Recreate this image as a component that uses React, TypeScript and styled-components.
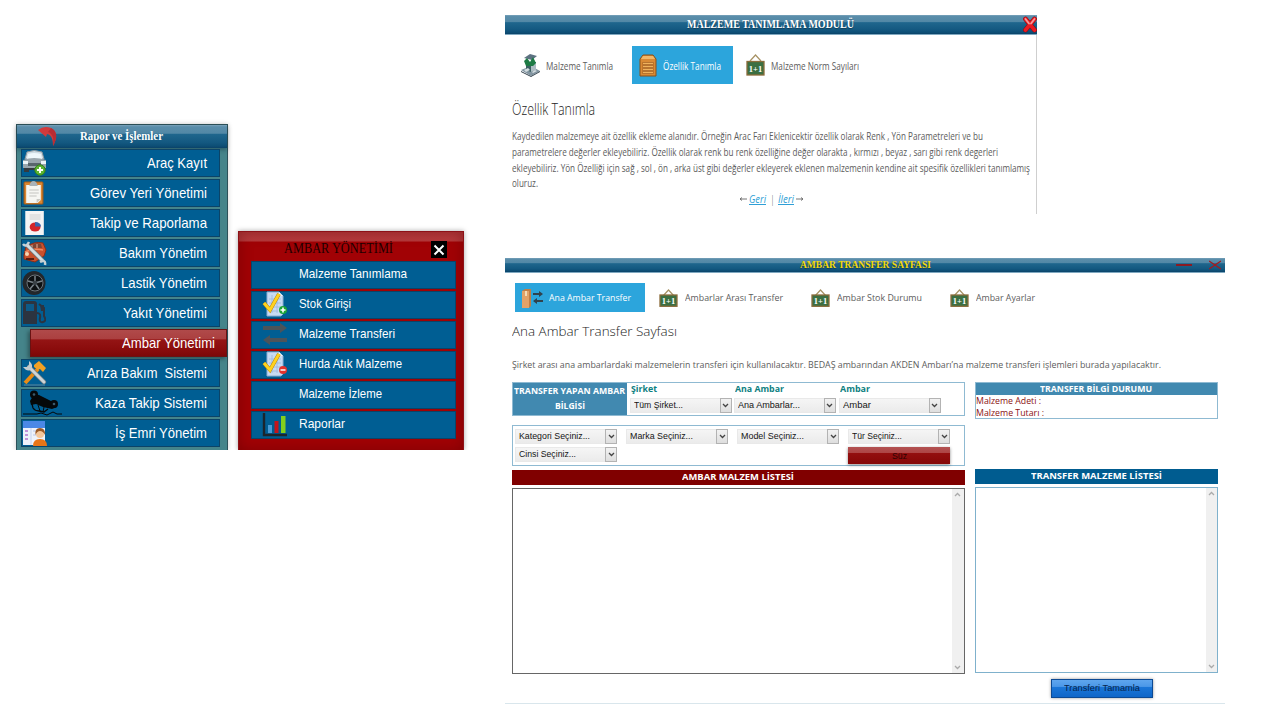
import React, { useLayoutEffect, useRef, useState } from 'react';
import styled, { createGlobalStyle, css } from 'styled-components';

const Global = createGlobalStyle`
  *, *::before, *::after { box-sizing: border-box; }
  body { margin: 0; background: #fff; }
`;

const sans = '"Liberation Sans", Arial, sans-serif';
const serif = '"Liberation Serif", "Times New Roman", serif';
const open = '"Open Sans", "Noto Sans", sans-serif';

/* ---------- fitted text ---------- */

const FitBox = styled.span<{ $w: number }>`
  display: inline-block;
  flex: none;
  width: ${(p) => p.$w}px;
  white-space: pre;
  text-align: left;
`;
const FitInner = styled.span`
  display: inline-block;
  transform-origin: 0 50%;
  text-decoration: inherit;
`;

function Fit({ w, children }: { w: number; children: React.ReactNode }) {
  const ref = useRef<HTMLSpanElement>(null);
  const [scale, setScale] = useState(1);
  useLayoutEffect(() => {
    if (ref.current) {
      const natural = parseFloat(getComputedStyle(ref.current).width);
      if (natural > 0) setScale(w / natural);
    }
  }, [w]);
  return (
    <FitBox $w={w}>
      <FitInner ref={ref} style={{ transform: `scaleX(${scale})` }}>{children}</FitInner>
    </FitBox>
  );
}

/* ---------- page ---------- */

const Page = styled.main`
  display: flex;
  align-items: flex-start;
  width: 1280px;
  height: 720px;
  overflow: hidden;
  padding-left: 16px;
  background: #fff;
`;

const blueGloss = css`
  background: linear-gradient(#7ba3bb 0, #5a8daa 8%, #5288a6 36%, #1f668d 40%, #145981 75%, #0d4e75 92%, #0b4267 100%);
`;

/* ---------- main menu ---------- */

const Menu = styled.nav`
  flex: none;
  width: 212px;
  height: 326px;
  margin-top: 124px;
  background: #45848a;
  border: 1px solid #2d5159;
  border-bottom: 0;
  box-shadow: 0 0 5px rgba(0, 0, 0, 0.2);
  clip-path: inset(-6px -6px 0 -6px);
  font-family: ${sans};
`;
const MenuHead = styled.div`
  ${blueGloss}
  display: flex;
  align-items: center;
  height: 23px;
  padding-left: 20px;
  gap: 19px;
  color: #fff;
  font: bold 12px ${serif};
  box-shadow: 0 2px 4px rgba(0, 30, 50, 0.35);
`;
const MenuList = styled.div`
  display: flex;
  flex-direction: column;
  gap: 2px;
  padding: 1px 0 0 4px;
`;
const MenuItem = styled.div<{ $active?: boolean }>`
  display: flex;
  align-items: center;
  justify-content: space-between;
  width: 199px;
  height: 28px;
  padding: 0 12px 0 0;
  border: 1px solid #0b4468;
  background: #005e93;
  color: #fff;
  font-size: 15px;
  line-height: 26px;
  ${(p) =>
    p.$active &&
    css`
      width: 197px;
      margin-left: 9px;
      padding-right: 11px;
      border-color: #6a1212;
      background: linear-gradient(#b04a4a 0, #ab4040 34%, #941414 38%, #8a0c0c 75%, #7c0808 100%);
      box-shadow: -2px 2px 4px rgba(0, 0, 0, 0.35);
    `}
`;

/* ---------- submenu ---------- */

const SubMenu = styled.nav`
  flex: none;
  width: 226px;
  height: 219px;
  margin: 231px 0 0 9.500px;
  padding: 0 0 0 12px;
  border: 1px solid #8d1117;
  border-bottom: 0;
  background: linear-gradient(rgba(255, 255, 255, 0.22) 0, rgba(255, 255, 255, 0.22) 9px, transparent 10px), #a10205;
  box-shadow: 0 0 5px rgba(0, 0, 0, 0.35), inset 0 0 14px rgba(80, 0, 0, 0.4);
  clip-path: inset(-6px -6px 0 -6px);
  font-family: ${sans};
`;
const SubHead = styled.div`
  display: flex;
  align-items: flex-end;
  height: 29px;
  padding: 0 16px 3px 33px;
  justify-content: space-between;
  color: #200000;
  font: 14px/18px ${serif};
`;
const SubList = styled.div`
  display: flex;
  flex-direction: column;
  gap: 2px;
`;
const SubItem = styled.div`
  display: grid;
  grid-template-columns: 47px auto;
  grid-template-rows: 24px;
  justify-content: start;
  align-items: center;
  width: 205px;
  height: 28px;
  border: 1px solid #0b4468;
  background: #005e93;
  color: #fff;
  font-size: 13.5px;
  line-height: 24px;
  svg { margin-left: 10px; }
`;

/* ---------- windows ---------- */

const Windows = styled.div`
  display: flex;
  flex-direction: column;
  flex: none;
  width: 720px;
  margin: 15px 0 0 41.500px;
  gap: 44px;
  color: #5c5c5c;
  font-family: ${open};
`;
const Win = styled.section<{ $w: number; $h: number; $side?: boolean }>`
  width: ${(p) => p.$w}px;
  height: ${(p) => p.$h}px;
  border-right: ${(p) => (p.$side ? '1px solid #cfcfcf' : '0')};
  border-bottom: ${(p) => (p.$side ? '0' : '1px solid #d9e6ec')};
`;
const WinBar = styled.header<{ $h: number; $pad: number; $color: string; $size: number; $over: number }>`
  ${blueGloss}
  display: flex;
  align-items: center;
  height: ${(p) => p.$h}px;
  padding: 0 0 1px ${(p) => p.$pad}px;
  margin-right: ${(p) => -p.$over}px;
  border-bottom: 1px solid #7fa8c0;
  color: ${(p) => p.$color};
  font: bold ${(p) => p.$size}px/14px ${serif};
  text-shadow: 0 1px 1px rgba(0, 0, 0, 0.35);
`;
const Controls = styled.div<{ $gap: number; $right: number }>`
  display: flex;
  align-items: center;
  gap: ${(p) => p.$gap}px;
  margin: 1px ${(p) => p.$right}px 0 auto;
`;
const Tabs = styled.div<{ $top: number; $left: number; $h: number; $size: number }>`
  display: flex;
  height: ${(p) => p.$h}px;
  margin: ${(p) => p.$top}px 0 0 ${(p) => p.$left}px;
  font-size: ${(p) => p.$size}px;
`;
const Tab = styled.div<{ $w: number; $pad: number; $gap: number; $active?: boolean }>`
  display: flex;
  align-items: center;
  flex: none;
  width: ${(p) => p.$w}px;
  padding-left: ${(p) => p.$pad}px;
  gap: ${(p) => p.$gap}px;
  ${(p) => p.$active && css`background: #2ca5dc; color: #fff;`}
`;
const Title = styled.h2<{ $top: number; $size: number }>`
  display: flex;
  margin: ${(p) => p.$top}px 0 0 6.500px;
  font-weight: 300;
  font-size: ${(p) => p.$size}px;
  line-height: 22px;
  color: #222;
`;
const Paragraph = styled.div<{ $top: number; $size: number }>`
  display: flex;
  flex-direction: column;
  margin: ${(p) => p.$top}px 0 0 6.500px;
  font-size: ${(p) => p.$size}px;
  line-height: 15.8px;
`;
const Pager = styled.div`
  display: flex;
  align-items: center;
  gap: 2px;
  height: 16px;
  margin: -1px 0 0 234px;
  font-size: 10.5px;
`;
const Link = styled.a`
  display: inline-flex;
  color: #2f9fd6;
  font-style: italic;
  span { text-decoration: underline; }
`;
const Divider = styled.span`
  padding: 0 2px 0 3px;
`;

/* ---------- transfer form ---------- */

const Columns = styled.div`
  display: flex;
  gap: 10px;
  margin: 8px 0 0 6.500px;
`;
const Col = styled.div<{ $w: number }>`
  display: flex;
  flex-direction: column;
  width: ${(p) => p.$w}px;
`;
const Source = styled.div`
  display: flex;
  height: 34px;
  border: 1px solid #8fbad2;
`;
const SourceLabel = styled.div`
  width: 114px;
  padding: 0;
  background: #4189b0;
  color: #fff;
  font-weight: 700;
  font-size: 8.3px;
  line-height: 15.5px;
  text-align: center;
`;
const Field = styled.div<{ $ml: number }>`
  width: 102px;
  margin-left: ${(p) => p.$ml}px;
  color: #0d8080;
  font-weight: 700;
  font-size: 8.5px;
`;
const FieldName = styled.div`
  display: flex;
  height: 15px;
  padding-left: 1px;
  line-height: 11px;
`;
const SelectBox = styled.div`
  display: flex;
  justify-content: space-between;
  width: 102px;
  height: 15px;
  padding-left: 3px;
  border: 1px solid #e9e9e9;
  border-right: 0;
  background: linear-gradient(#f5f5f5, #ebebeb);
  color: #151515;
  font: 9px/12px ${sans};
`;
const Arrow = styled.span`
  display: flex;
  align-items: center;
  justify-content: center;
  width: 12px;
  height: 15px;
  margin-top: -1px;
  border: 1px solid #b3b3b3;
  background: linear-gradient(#f2f2f2, #dedede);
`;
const Filters = styled.div`
  display: grid;
  grid-template-columns: 111px 111px 111px 102px;
  grid-template-rows: 15px 17px;
  row-gap: 3px;
  height: 41px;
  margin-top: 9px;
  padding: 3px 0 0 2.500px;
  border: 1px solid #8fbad2;
`;
const FilterButton = styled.button`
  grid-column: 4;
  width: 102px;
  height: 17px;
  padding: 2px 0 0;
  border: 0;
  background: linear-gradient(#b35252 0, #ad4545 34%, #930f0f 38%, #850707 100%);
  box-shadow: 0 1px 3px rgba(0, 0, 0, 0.45);
  color: #2b0303;
  font: 9px/13px ${sans};
`;
const Strip = styled.div<{ $bg: string; $top: number }>`
  display: flex;
  align-items: center;
  justify-content: center;
  height: 15px;
  margin-top: ${(p) => p.$top}px;
  background: ${(p) => p.$bg};
  color: #fff;
  font-weight: 700;
  font-size: 8.8px;
`;
const ListBox = styled.div<{ $border: string }>`
  display: flex;
  justify-content: flex-end;
  height: 186px;
  margin-top: 3px;
  border: 1px solid ${(p) => p.$border};
`;
const Scroll = styled.div<{ $w: number }>`
  display: flex;
  flex-direction: column;
  justify-content: space-between;
  align-items: center;
  width: ${(p) => p.$w}px;
  padding: 3px 0;
  background: #f0f0f0;
`;
const Info = styled.div`
  display: flex;
  flex-direction: column;
  height: 37px;
  border: 1px solid #8fbad2;
  color: #8a1111;
  font-size: 8.6px;
  line-height: 12px;
`;
const InfoHead = styled.div`
  display: flex;
  justify-content: center;
  height: 13px;
  background: #4189b0;
  color: #fff;
  font-weight: 700;
  font-size: 8.5px;
`;
const DoneButton = styled.button`
  align-self: flex-start;
  width: 102px;
  height: 19px;
  margin: 6px 0 0 76px;
  padding: 0;
  border: 1px solid #0c4a94;
  background: linear-gradient(#5fa6ee 0, #4b98e8 38%, #1a76d8 42%, #0f66c8 100%);
  box-shadow: 0 0 3px rgba(0, 0, 0, 0.4);
  color: #06254e;
  font: 9px/14px ${sans};
`;

/* ---------- icons ---------- */

const Swirl = () => (
  <svg width="24" height="22" viewBox="0 0 24 22">
    <path d="M1 4Q7-1 14 2c6 3 7 9 2 18 0-6-1-11-6-12L9 11z" fill="#d23a3c" />
    <path d="M14 2c6 3 7 9 2 18 1-8 0-12-5-14z" fill="#b92c33" />
  </svg>
);
const CarAdd = () => (
  <svg width="25" height="26" viewBox="0 0 25 26">
    <path d="M5 2Q12-1 20 2l2 7H3z" fill="#cfdce3" stroke="#8a979e" />
    <path d="M6 4q6-2 13 0l1 5H5z" fill="#eef7fb" />
    <path d="M1 10q11-4 23 0v8H1z" fill="#9aa6ad" />
    <path d="M6 13h13v3H6z" fill="#59656c" />
    <path d="M1 11h5v3H1zM19 11h5v3h-5z" fill="#edf4f6" />
    <path d="M2 18h5v4H2zM7 18h9v2H7z" fill="#343b40" />
    <circle cx="18" cy="20" r="5.2" fill="#5cb531" stroke="#35811a" />
    <path d="M18 17v6M15 20h6" stroke="#fff" strokeWidth="2" />
  </svg>
);
const Clipboard = () => (
  <svg width="23" height="26" viewBox="0 0 22 26" preserveAspectRatio="none">
    <rect x="2" y="2" width="18" height="22" rx="1" fill="#d98631" stroke="#a85d18" />
    <path d="M4 5h14v15l-3 3H4z" fill="#f6f6f2" />
    <path d="m18 19-4 4v-4z" fill="#c9c9c4" />
    <path d="M7 6q1-5 4-5t4 5z" fill="#aab3b8" />
    <path d="M7 10h9M7 13h9M7 16h7" stroke="#c4c4c0" />
  </svg>
);
const PieReport = () => (
  <svg width="24" height="26" viewBox="0 0 22 26" preserveAspectRatio="none">
    <rect x="3" y="1" width="17" height="24" fill="#f4f4f4" />
    <path d="M7 5h10M7 7h10M7 9h10" stroke="#cfcfcf" strokeWidth="1.2" />
    <ellipse cx="12" cy="17" rx="5" ry="4.5" fill="#d3252a" />
    <path d="M12 16.500V12q5 0 5.500 4.500z" fill="#3567ad" />
  </svg>
);
const CarWrench = () => (
  <svg width="26" height="26" viewBox="0 0 26 26">
    <path d="m2 15 2-8q8-6 17-4l3 7-2 6-9 6L2 19z" fill="#c9502c" stroke="#8c2c15" />
    <path d="m7 8 3-3q5-3 9-1l1 4z" fill="#7d4535" />
    <path d="M10 8V5M15 8V4" stroke="#efb197" />
    <path d="M3 12q8-4 18-2" fill="none" stroke="#ee8a62" strokeWidth="1.500" />
    <circle cx="5" cy="14" r="2" fill="#f6d5b2" />
    <path d="M4 18h8v2H4z" fill="#5a1c10" />
    <path d="m5 5 16 16" stroke="#68757b" strokeWidth="4.500" />
    <path d="m5 5 16 16" stroke="#d5dde0" strokeWidth="3" />
    <path d="M1 4q3 4 6-2M23 25q1-6-5-3" fill="none" stroke="#c6d0d4" strokeWidth="2.500" />
  </svg>
);
const Tire = () => (
  <svg width="25" height="26" viewBox="0 0 25 26">
    <ellipse cx="12" cy="13" rx="11.500" ry="12" fill="#23272b" />
    <circle cx="13" cy="13" r="8" fill="#0d1012" stroke="#6b7379" />
    <path d="M13 6v7l7-2M13 13l4 6M13 13l-5 6M13 13 6 11" fill="none" stroke="#7b848a" strokeWidth="1.500" />
    <circle cx="13" cy="13" r="2.300" fill="#3b4247" />
  </svg>
);
const Pump = () => (
  <svg width="24" height="26" viewBox="0 0 24 26">
    <path d="M1 24V4q0-3 3-3h8q3 0 3 3v20z" fill="#2c3440" />
    <rect x="4" y="4" width="8" height="7" fill="#0d5a88" />
    <path d="M15 13q4 0 3 5t3 4 1-6V8l-5-4" fill="none" stroke="#2c3440" strokeWidth="2" />
    <path d="M18 5h4v6h-3z" fill="#2c3440" />
  </svg>
);
const Tools = () => (
  <svg width="26" height="26" viewBox="0 0 26 26">
    <path d="M2 25h21" stroke="#60869a" />
    <path d="M3 23 16 9" stroke="#e88b16" strokeWidth="4" />
    <path d="m12 5 5-4 7 7-3 4-3-3-2 1-4-3z" fill="#f0a124" />
    <path d="m7 7 15 15" stroke="#707b80" strokeWidth="4.500" strokeLinecap="round" />
    <path d="m7 7 15 15" stroke="#cdd4d6" strokeWidth="3" strokeLinecap="round" />
    <path d="M7 1q5 4 2 8T1 7l4 0 2-2z" fill="#c3cbce" />
  </svg>
);
const Crash = () => (
  <svg width="41" height="26" viewBox="0 0 41 26">
    <path d="M8 11 11 6q3-2 6-1l14 7q5 1 4 5l-5 2-9-2-7-3-5 1z" fill="#05080a" />
    <path d="M10 14 11 18q2 3 6 3l5 1 4-3" fill="none" stroke="#05080a" strokeWidth="1.300" />
    <path d="m16 15 2 6M22 17l-1 5" stroke="#05080a" />
    <circle cx="12" cy="4.500" r="4" fill="#05080a" />
    <circle cx="32" cy="14" r="4" fill="#05080a" />
    <circle cx="12" cy="4.500" r="1.300" fill="#3b5a6c" />
    <circle cx="32" cy="14" r="1.300" fill="#3b5a6c" />
    <path d="M1 24h14l4-1 6 2 6-3 4 2h5" fill="none" stroke="#05080a" />
  </svg>
);
const WorkOrder = () => (
  <svg width="25" height="26" viewBox="0 0 25 26">
    <rect x="1" y="1" width="22" height="24" fill="#eef2fb" />
    <rect x="1" y="1" width="22" height="7" fill="#4b88e6" />
    <path d="M9 8v17" stroke="#c5d3f0" />
    <path d="M3 11h3M3 15h3M3 19h3" stroke="#b573cf" strokeWidth="1.500" />
    <path d="M11 11h10M11 15h3" stroke="#b9c6e8" />
    <path d="M11 26q0-7 7-7t7 7z" fill="#e77517" />
    <circle cx="18" cy="14" r="4" fill="#f5c79b" />
    <path d="M13.500 15q-1-7 4.500-7t5 7q-2-4-5-4t-4.500 4z" fill="#9a5a28" />
  </svg>
);
const DocCheck = ({ minus }: { minus?: boolean }) => (
  <svg width="26" height="26" viewBox="0 0 26 26">
    <path d="M5 1h12l4 4v18l-2 2H5z" fill="#c8daf2" stroke="#8daed3" />
    <path d="M17 1v4h4z" fill="#eff6ff" />
    <path d="M7 8h12M7 12h12M7 16h12M7 20h9M10 4v18M15 4v18" stroke="#9db7dc" strokeWidth=".8" />
    <path d="m2 12 6 7L17 3" fill="none" stroke="#b8860c" strokeWidth="3.800" />
    <path d="m2 12 6 7L17 3" fill="none" stroke="#ffd21f" strokeWidth="2.800" />
    <circle cx="21" cy="19" r="4" fill={minus ? '#e3322d' : '#1ca436'} />
    <path d={minus ? 'M18.500 19h5' : 'M18.500 19h5M21 16.500v5'} stroke="#fff" strokeWidth="1.600" />
  </svg>
);
const Swap = () => (
  <svg width="26" height="22" viewBox="0 0 26 22">
    <path d="M1 3h17V0l7 5-7 5V7H1zM25 15H8v-3l-7 5 7 5v-3h17z" fill="#4c5359" />
  </svg>
);
const Chart = () => (
  <svg width="26" height="26" viewBox="0 0 26 26">
    <path d="M2 2v22h23" fill="none" stroke="#1c252c" strokeWidth="2.400" />
    <rect x="6" y="14" width="4" height="8" fill="#4b9bd6" />
    <rect x="12.500" y="10" width="4" height="12" fill="#c4141b" />
    <rect x="19" y="5" width="4.500" height="17" fill="#84cf1c" />
  </svg>
);
const Cross = styled.span`
  display: flex;
  align-items: center;
  justify-content: center;
  width: 16px;
  height: 17px;
  background: #000;
`;
const Blocks = () => (
  <svg width="19" height="23" viewBox="0 0 19 23">
    <path d="m0 16 10-4 9 5-9 5z" fill="#8295a1" />
    <path d="m0 17 10 5v1L0 18zM10 22l9-5v1l-9 5z" fill="#34434e" />
    <path d="M5 8h10v8l-5 2-5-2z" fill="#3b5f62" />
    <path d="M10 9h5v7l-5 2z" fill="#aebdc4" />
    <path d="m3 4 6-4 7 2-5 4z" fill="#5d7281" />
    <path d="m3 7 3-3 3 4 3-5 3 6-3 3H5z" fill="#1e7b45" />
    <path d="m3 16 4-2 2 2-4 2zM11 18l3-2 2 1-4 2z" fill="#d4dde1" />
  </svg>
);
const Crate = () => (
  <svg width="18" height="23" viewBox="0 0 18 23">
    <path d="m1 5 3-4h10l3 4v17H1z" fill="#d98a34" stroke="#875018" />
    <path d="M2 5h14l-2-3H4z" fill="#f0b768" />
    <rect x="3.500" y="8" width="11" height="12" fill="#a45f20" />
    <path d="M4 9.500h10M4 12.500h10M4 15.500h10M4 18.500h10" stroke="#efb25c" strokeWidth="1.600" />
  </svg>
);
const BoardSvg = styled.svg`
  overflow: visible;
`;
const BoardText = styled.text`
  font: bold 8.5px ${serif};
  fill: #fff;
  text-anchor: middle;
`;
const Board = ({ h = 22 }: { h?: number }) => (
  <BoardSvg width="19" height={h} viewBox={`0 0 19 ${h}`}>
    <path d="m4 7 5.500-6L15 7" fill="none" stroke="#a79264" strokeWidth="1.200" />
    <rect x="1" y={h === 22 ? 7.5 : 6} width="17" height={h === 22 ? 13.5 : 11.3} fill="#3b6f42" stroke="#8b6c3a" strokeWidth="1.300" />
    <BoardText x="9.500" y={h === 22 ? 17.5 : 14.8}>1+1</BoardText>
  </BoardSvg>
);
const BoxSwap = () => (
  <svg width="22" height="20" viewBox="0 0 22 20">
    <path d="M1 3 4 1h6v17l-2 2H1z" fill="#c17e45" />
    <path d="M1 3h7v17H1z" fill="#e3a267" />
    <path d="M4 3h2v5H4z" fill="#f4dcb4" />
    <path d="M12 5h6V3l4 3-4 3V7h-6zM22 12h-6v-2l-4 3 4 3v-2h6z" fill="#30424e" />
  </svg>
);
const RedX = () => (
  <svg width="14" height="17" viewBox="0 0 14 17">
    <path d="m2.500 3 9 11M11.500 3l-9 11" stroke="#8b0a10" strokeWidth="4.800" strokeLinecap="round" />
    <path d="m2.500 3 9 11M11.500 3l-9 11" stroke="#ea1b22" strokeWidth="3.600" strokeLinecap="round" />
    <path d="m2.500 3 3.500 4.500M11.500 3 8 7.500" stroke="#f79a9a" strokeWidth="1.800" strokeLinecap="round" />
  </svg>
);
const Chevron = ({ up, color = '#444' }: { up?: boolean; color?: string }) => (
  <svg width="7" height="5" viewBox="0 0 7 5">
    <path d={up ? 'm1 4 2.500-2.500L6 4' : 'm1 1 2.500 2.500L6 1'} fill="none" stroke={color} strokeWidth="1.300" />
  </svg>
);
const PagerArrow = ({ back }: { back?: boolean }) => (
  <svg width="8" height="6" viewBox="0 0 8 6">
    <path d={back ? 'M8 3H1M3 1.500 1 3l2 1.500' : 'M0 3h7M5 1.500 7 3 5 4.500'} fill="none" stroke="#666" strokeWidth=".9" />
  </svg>
);

const Select = ({ label, w }: { label: string; w: number }) => (
  <SelectBox>
    <Fit w={w}>{label}</Fit>
    <Arrow><Chevron /></Arrow>
  </SelectBox>
);

/* ---------- data ---------- */

const menu: { label: string; w: number; icon?: React.ReactNode }[] = [
  { label: 'Araç Kayıt', w: 60, icon: <CarAdd /> },
  { label: 'Görev Yeri Yönetimi', w: 117, icon: <Clipboard /> },
  { label: 'Takip ve Raporlama', w: 117, icon: <PieReport /> },
  { label: 'Bakım Yönetim', w: 88, icon: <CarWrench /> },
  { label: 'Lastik Yönetim', w: 86, icon: <Tire /> },
  { label: 'Yakıt Yönetimi', w: 84, icon: <Pump /> },
  { label: 'Ambar Yönetimi', w: 93 },
  { label: 'Arıza Bakım  Sistemi', w: 120, icon: <Tools /> },
  { label: 'Kaza Takip Sistemi', w: 112, icon: <Crash /> },
  { label: 'İş Emri Yönetim', w: 92, icon: <WorkOrder /> },
];

const subMenu: { label: string; w: number; icon?: React.ReactNode }[] = [
  { label: 'Malzeme Tanımlama', w: 108 },
  { label: 'Stok Girişi', w: 52, icon: <DocCheck /> },
  { label: 'Malzeme Transferi', w: 96, icon: <Swap /> },
  { label: 'Hurda Atık Malzeme', w: 103, icon: <DocCheck minus /> },
  { label: 'Malzeme İzleme', w: 83 },
  { label: 'Raporlar', w: 46, icon: <Chart /> },
];

export default function App() {
  return (
    <>
      <Global />
      <Page>
        <Menu>
          <MenuHead>
            <Swirl />
            <Fit w={83}>Rapor ve İşlemler</Fit>
          </MenuHead>
          <MenuList>
            {menu.map((m) => (
              <MenuItem key={m.label} $active={!m.icon}>
                {m.icon ?? <span />}
                <Fit w={m.w}>{m.label}</Fit>
              </MenuItem>
            ))}
          </MenuList>
        </Menu>

        <SubMenu>
          <SubHead>
            <Fit w={109}>AMBAR YÖNETİMİ</Fit>
            <Cross>
              <svg width="12" height="12" viewBox="0 0 12 12">
                <path d="m1.500 1.500 9 9M10.500 1.500l-9 9" stroke="#fff" strokeWidth="2" />
              </svg>
            </Cross>
          </SubHead>
          <SubList>
            {subMenu.map((m) => (
              <SubItem key={m.label}>
                {m.icon ?? <span />}
                <Fit w={m.w}>{m.label}</Fit>
              </SubItem>
            ))}
          </SubList>
        </SubMenu>

        <Windows>
          <Win $w={532} $h={199} $side>
            <WinBar $h={20} $pad={182} $color="#fff" $size={12} $over={1}>
              <Fit w={167}>MALZEME TANIMLAMA MODULÜ</Fit>
              <Controls $gap={0} $right={0}><RedX /></Controls>
            </WinBar>
            <Tabs $top={11} $left={0} $h={38} $size={10.8}>
              <Tab $w={127} $pad={16} $gap={6}><Blocks /><Fit w={67}>Malzeme Tanımla</Fit></Tab>
              <Tab $w={101} $pad={7} $gap={6} $active><Crate /><Fit w={58}>Özellik Tanımla</Fit></Tab>
              <Tab $w={140} $pad={13} $gap={6}><Board /><Fit w={88}>Malzeme Norm Sayıları</Fit></Tab>
            </Tabs>
            <Title $top={14} $size={15.5}><Fit w={83}>Özellik Tanımla</Fit></Title>
            <Paragraph $top={9} $size={10.6}>
              <Fit w={471}>Kaydedilen malzemeye ait özellik ekleme alanıdır. Örneğin Arac Farı Eklenicektir özellik olarak Renk , Yön Parametreleri ve bu</Fit>
              <Fit w={486}>parametrelere değerler ekleyebiliriz. Özellik olarak renk bu renk özelliğine değer olarakta , kırmızı , beyaz , sarı gibi renk degerleri</Fit>
              <Fit w={518}>ekleyebiliriz. Yön Özelliği için sağ , sol , ön , arka üst gibi değerler ekleyerek eklenen malzemenin kendine ait spesifik özellikleri tanımlamış</Fit>
              <Fit w={26}>oluruz.</Fit>
            </Paragraph>
            <Pager>
              <PagerArrow back />
              <Link><Fit w={17}>Geri</Fit></Link>
              <Divider><Fit w={3}>|</Fit></Divider>
              <Link><Fit w={16}>İleri</Fit></Link>
              <PagerArrow />
            </Pager>
          </Win>

          <Win $w={720} $h={446}>
            <WinBar $h={15} $pad={295} $color="#f4d90a" $size={9.5} $over={0}>
              <Fit w={131}>AMBAR TRANSFER SAYFASI</Fit>
              <Controls $gap={17} $right={4}>
                <svg width="16" height="4" viewBox="0 0 16 4"><path d="M0 2h16" stroke="#8b1a22" strokeWidth="2" /></svg>
                <svg width="12" height="10" viewBox="0 0 12 10"><path d="m0 1 12 8M12 1 0 9" stroke="#a01c22" strokeWidth="1.400" /></svg>
              </Controls>
            </WinBar>
            <Tabs $top={10} $left={10} $h={29} $size={8.8}>
              <Tab $w={130} $pad={6} $gap={6} $active><BoxSwap /><Fit w={82}>Ana Ambar Transfer</Fit></Tab>
              <Tab $w={152} $pad={14} $gap={7}><Board h={18} /><Fit w={98}>Ambarlar Arası Transfer</Fit></Tab>
              <Tab $w={138} $pad={14} $gap={7}><Board h={18} /><Fit w={85}>Ambar Stok Durumu</Fit></Tab>
              <Tab $w={130} $pad={15} $gap={7}><Board h={18} /><Fit w={59}>Ambar Ayarlar</Fit></Tab>
            </Tabs>
            <Title $top={9} $size={12.2}><Fit w={165}>Ana Ambar Transfer Sayfası</Fit></Title>
            <Paragraph $top={15} $size={8.6}>
              <Fit w={649}>Şirket arası ana ambarlardaki malzemelerin transferi için kullanılacaktır. BEDAŞ ambarından AKDEN Ambarı’na malzeme transferi işlemleri burada yapılacaktır.</Fit>
            </Paragraph>
            <Columns>
              <Col $w={453}>
                <Source>
                  <SourceLabel>
                    <Fit w={111}>TRANSFER YAPAN AMBAR</Fit>
                    <Fit w={30}>BİLGİSİ</Fit>
                  </SourceLabel>
                  <Field $ml={3}><FieldName><Fit w={26}>Şirket</Fit></FieldName><Select label="Tüm Şirket..." w={49} /></Field>
                  <Field $ml={2}><FieldName><Fit w={49}>Ana Ambar</Fit></FieldName><Select label="Ana Ambarlar..." w={62} /></Field>
                  <Field $ml={3}><FieldName><Fit w={30}>Ambar</Fit></FieldName><Select label="Ambar" w={28} /></Field>
                </Source>
                <Filters>
                  <Select label="Kategori Seçiniz..." w={71} />
                  <Select label="Marka Seçiniz..." w={63} />
                  <Select label="Model Seçiniz..." w={63} />
                  <Select label="Tür Seçiniz..." w={50} />
                  <Select label="Cinsi Seçiniz..." w={57} />
                  <FilterButton><Fit w={15}>Süz</Fit></FilterButton>
                </Filters>
                <Strip $bg="#800000" $top={4}><Fit w={112}>AMBAR MALZEM LİSTESİ</Fit></Strip>
                <ListBox $border="#666">
                  <Scroll $w={12}><Chevron up color="#aaa" /><Chevron color="#aaa" /></Scroll>
                </ListBox>
              </Col>
              <Col $w={243}>
                <Info>
                  <InfoHead><Fit w={112}>TRANSFER BİLGİ DURUMU</Fit></InfoHead>
                  <Fit w={65}>Malzeme Adeti :</Fit>
                  <Fit w={68}>Malzeme Tutarı :</Fit>
                </Info>
                <Strip $bg="#005c90" $top={50}><Fit w={131}>TRANSFER MALZEME LİSTESİ</Fit></Strip>
                <ListBox $border="#7fb1cc">
                  <Scroll $w={11}><Chevron up color="#aaa" /><Chevron color="#aaa" /></Scroll>
                </ListBox>
                <DoneButton><Fit w={76}>Transferi Tamamla</Fit></DoneButton>
              </Col>
            </Columns>
          </Win>
        </Windows>
      </Page>
    </>
  );
}
